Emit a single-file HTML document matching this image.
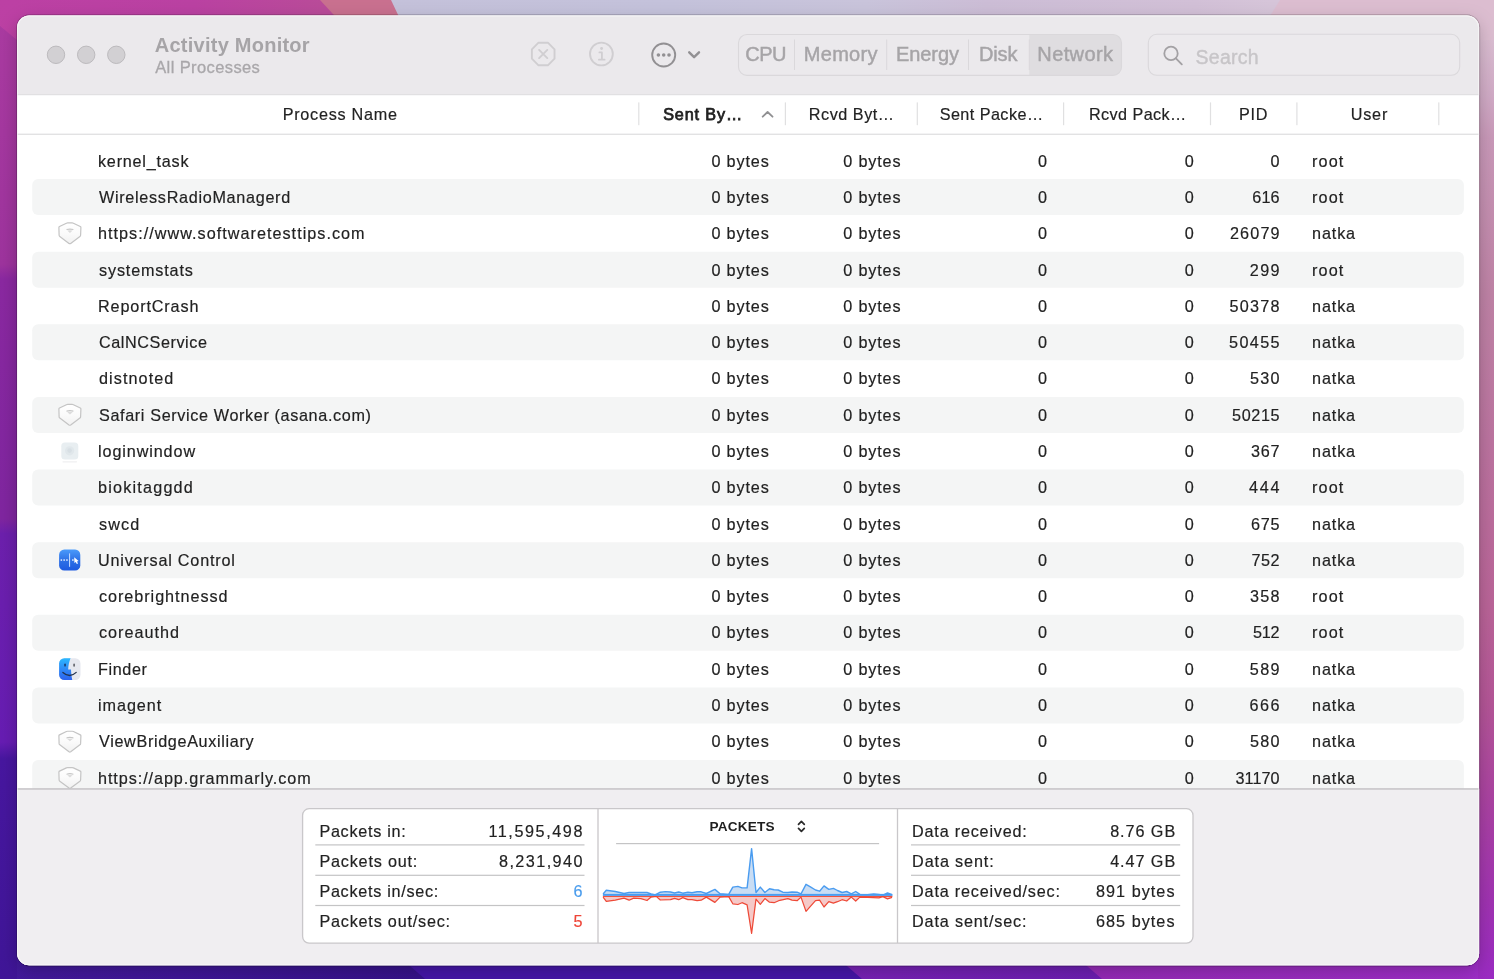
<!DOCTYPE html>
<html lang="en">
<head>
<meta charset="utf-8">
<title>Activity Monitor</title>
<style>
html,body{margin:0;padding:0;}
body{width:1494px;height:979px;overflow:hidden;position:relative;background:#8a2aa0;font-family:"Liberation Sans", sans-serif;}
.abs,.t,.stripe{position:absolute;}
.t{white-space:pre;font-family:"Liberation Sans", sans-serif;-webkit-text-stroke:0.18px currentColor;}

#bg{position:absolute;left:0;top:0;width:1494px;height:979px;display:block;}
#win{position:absolute;left:0;top:0;width:1494px;height:979px;}
#txt{position:absolute;left:0;top:0;width:1494px;height:979px;will-change:transform;}

</style>
</head>
<body>
<svg id="bg" width="1494" height="979" viewBox="0 0 1494 979"><defs><linearGradient id="gl" gradientUnits="userSpaceOnUse" x1="0" y1="0" x2="0" y2="979"><stop offset="0" stop-color="#bc40a4"/><stop offset="0.06" stop-color="#bb40a3"/><stop offset="0.25" stop-color="#9d339d"/><stop offset="1" stop-color="#9d339d"/></linearGradient><linearGradient id="gl2" gradientUnits="userSpaceOnUse" x1="0" y1="0" x2="0" y2="979"><stop offset="0" stop-color="#ab3ba1"/><stop offset="0.27" stop-color="#9d339d"/><stop offset="0.285" stop-color="#8a28a0"/><stop offset="0.53" stop-color="#7f259f"/><stop offset="0.545" stop-color="#6c1fac"/><stop offset="0.758" stop-color="#661cb2"/><stop offset="0.775" stop-color="#47169f"/><stop offset="1" stop-color="#3f1597"/></linearGradient><linearGradient id="shg" gradientUnits="userSpaceOnUse" x1="0" y1="223" x2="0" y2="244"><stop offset="0" stop-color="#ffffff"/><stop offset="0.45" stop-color="#fbfbfb"/><stop offset="1" stop-color="#f1f1f1"/></linearGradient><linearGradient id="gr" gradientUnits="userSpaceOnUse" x1="0" y1="0" x2="0" y2="979"><stop offset="0" stop-color="#dcc0d3"/><stop offset="0.04" stop-color="#dabdd1"/><stop offset="0.1" stop-color="#d0aac5"/><stop offset="0.14" stop-color="#c999b9"/><stop offset="0.3" stop-color="#bf83a6"/><stop offset="0.45" stop-color="#bc74a0"/><stop offset="0.62" stop-color="#ba6498"/><stop offset="0.72" stop-color="#b45597"/><stop offset="0.82" stop-color="#aa42a2"/><stop offset="0.92" stop-color="#a033b2"/><stop offset="1" stop-color="#9a2bc2"/></linearGradient><linearGradient id="gt" gradientUnits="userSpaceOnUse" x1="0" y1="0" x2="1494" y2="0"><stop offset="0" stop-color="#bc40a4"/><stop offset="0.13" stop-color="#ba41a2"/><stop offset="0.215" stop-color="#b94b99"/><stop offset="0.25" stop-color="#b94b99"/><stop offset="0.2501" stop-color="#c4c1da"/><stop offset="0.45" stop-color="#c4c2db"/><stop offset="0.58" stop-color="#c9c4db"/><stop offset="0.66" stop-color="#ccbdd6"/><stop offset="0.8" stop-color="#d2c0d7"/><stop offset="0.85" stop-color="#d6c5d9"/><stop offset="1" stop-color="#d6c5d9"/></linearGradient><linearGradient id="gb" gradientUnits="userSpaceOnUse" x1="0" y1="0" x2="1494" y2="0"><stop offset="0" stop-color="#431a9c"/><stop offset="0.12" stop-color="#3f1698"/><stop offset="0.28" stop-color="#36128a"/><stop offset="1" stop-color="#36128a"/></linearGradient><linearGradient id="gb2" gradientUnits="userSpaceOnUse" x1="817" y1="0" x2="1105" y2="0"><stop offset="0" stop-color="#7a22b6"/><stop offset="1" stop-color="#6c1eb2"/></linearGradient><linearGradient id="gb3" gradientUnits="userSpaceOnUse" x1="1057" y1="0" x2="1494" y2="0"><stop offset="0" stop-color="#952ab6"/><stop offset="1" stop-color="#9e2ec8"/></linearGradient><clipPath id="wc"><rect x="17.1" y="15.5" width="1462.0" height="949.8" rx="12" ry="12"/></clipPath><filter id="sh" x="-5%" y="-5%" width="110%" height="110%"><feGaussianBlur stdDeviation="9"/></filter><clipPath id="segc"><rect x="738.5" y="34.5" width="383.0" height="40.9" rx="8.5"/></clipPath><linearGradient id="ucg" gradientUnits="userSpaceOnUse" x1="0" y1="549.4" x2="0" y2="570.6"><stop offset="0" stop-color="#4a9bfb"/><stop offset="0.5" stop-color="#2f72e6"/><stop offset="1" stop-color="#1d5ae0"/></linearGradient><linearGradient id="fg" gradientUnits="userSpaceOnUse" x1="0" y1="658.2" x2="0" y2="680"><stop offset="0" stop-color="#2bb8ff"/><stop offset="0.5" stop-color="#2f8af6"/><stop offset="1" stop-color="#2c62ee"/></linearGradient><clipPath id="fc"><rect x="59.1" y="658.3" width="21.4" height="21.7" rx="5.2"/></clipPath></defs>
<rect x="0" y="0" width="747" height="979" fill="url(#gl)"/>
<rect x="747" y="0" width="747" height="979" fill="url(#gr)"/>
<rect x="17" y="0" width="1461" height="40" fill="url(#gt)"/>
<polygon points="320,0 391,0 410,40 357,40" fill="#c9708f"/>
<polygon points="1280,0 1494,0 1494,40 1255,40" fill="#dcbdd0"/>
<rect x="17" y="940" width="1461" height="39" fill="url(#gb)"/>
<polygon points="380,940 820,940 865,979 425,979" fill="#4516a8"/>
<polygon points="817,940 1060,940 1105,979 862,979" fill="url(#gb2)"/>
<polygon points="1057,940 1478,940 1478,979 1102,979" fill="url(#gb3)"/>
<polygon points="0,26 17,40 17,979 0,979" fill="url(#gl2)"/>
<rect x="17.1" y="21.5" width="1462.0" height="949.8" rx="12" fill="#000" fill-opacity="0.22" filter="url(#sh)"/>
<rect x="16.6" y="15.0" width="1463.0" height="950.8" rx="12.5" fill="none" stroke="#000" stroke-opacity="0.17" stroke-width="1.2"/>
<rect x="26.1" y="14.4" width="1444.0" height="1.2" fill="#000" fill-opacity="0.11"/>
<rect x="26.1" y="965.1999999999999" width="1444.0" height="1.2" fill="#000" fill-opacity="0.16"/>
<g clip-path="url(#wc)">
<rect x="0" y="0" width="1494" height="979" fill="#ffffff"/>
<rect x="0" y="0" width="1494" height="94.6" fill="#ebe9ec"/>
<rect x="0" y="94.2" width="1494" height="1" fill="#dddbde"/>
<rect x="0" y="133.65" width="1494" height="1.2" fill="#dededf"/>
<rect x="0" y="789" width="1494" height="200" fill="#f0eef1"/>
<rect x="32.2" y="179.07" width="1431.7" height="36" rx="6" fill="#f4f5f5"/>
<rect x="32.2" y="251.69" width="1431.7" height="36" rx="6" fill="#f4f5f5"/>
<rect x="32.2" y="324.31" width="1431.7" height="36" rx="6" fill="#f4f5f5"/>
<rect x="32.2" y="396.93" width="1431.7" height="36" rx="6" fill="#f4f5f5"/>
<rect x="32.2" y="469.55" width="1431.7" height="36" rx="6" fill="#f4f5f5"/>
<rect x="32.2" y="542.17" width="1431.7" height="36" rx="6" fill="#f4f5f5"/>
<rect x="32.2" y="614.79" width="1431.7" height="36" rx="6" fill="#f4f5f5"/>
<rect x="32.2" y="687.41" width="1431.7" height="36" rx="6" fill="#f4f5f5"/>
<rect x="32.2" y="760.03" width="1431.7" height="36" rx="6" fill="#f4f5f5"/>
<rect x="0" y="789" width="1494" height="200" fill="#f0eef1"/>
<rect x="0" y="788.2" width="1494" height="1.5" fill="#c5c3c6"/>
<rect x="638.2" y="102.4" width="1.2" height="22.8" fill="#e0e0e1"/>
<rect x="784.8" y="102.4" width="1.2" height="22.8" fill="#e0e0e1"/>
<rect x="916.7" y="102.4" width="1.2" height="22.8" fill="#e0e0e1"/>
<rect x="1063.0" y="102.4" width="1.2" height="22.8" fill="#e0e0e1"/>
<rect x="1209.9" y="102.4" width="1.2" height="22.8" fill="#e0e0e1"/>
<rect x="1296.3" y="102.4" width="1.2" height="22.8" fill="#e0e0e1"/>
<rect x="1438.2" y="102.4" width="1.2" height="22.8" fill="#e0e0e1"/>
<path d="M762.7 116.7 L767.6 112.0 L772.5 116.7" fill="none" stroke="#909092" stroke-width="1.8" stroke-linecap="round" stroke-linejoin="round"/>
</g>
<rect x="17.6" y="16.0" width="1461.0" height="948.8" rx="11.5" fill="none" stroke="#fff" stroke-opacity="0.55" stroke-width="1"/>
<circle cx="56.0" cy="54.8" r="8.7" fill="#d2d0d3" stroke="#bcbabd" stroke-width="1"/>
<circle cx="86.2" cy="54.8" r="8.7" fill="#d2d0d3" stroke="#bcbabd" stroke-width="1"/>
<circle cx="116.3" cy="54.8" r="8.7" fill="#d2d0d3" stroke="#bcbabd" stroke-width="1"/>
<polygon points="554.52,58.69 547.89,65.32 538.51,65.32 531.88,58.69 531.88,49.31 538.51,42.68 547.89,42.68 554.52,49.31" fill="none" stroke="#d0ced1" stroke-width="1.9" stroke-linejoin="round"/>
<path d="M539.1 49.9 L547.3 58.1 M547.3 49.9 L539.1 58.1" stroke="#d0ced1" stroke-width="1.9" stroke-linecap="round" fill="none"/>
<circle cx="601.4" cy="54.0" r="11.4" fill="none" stroke="#d0ced1" stroke-width="1.9"/>
<path d="M599.4 52.4 L601.9 52.4 L601.9 59.4 M598.9 59.7 L604.6 59.7" stroke="#d0ced1" stroke-width="1.8" stroke-linecap="round" stroke-linejoin="round" fill="none"/>
<circle cx="601.6" cy="48.5" r="1.45" fill="#d0ced1"/>
<circle cx="663.7" cy="55.0" r="11.5" fill="none" stroke="#929093" stroke-width="1.9"/>
<circle cx="658.4" cy="55.0" r="1.8" fill="#929093"/>
<circle cx="663.7" cy="55.0" r="1.8" fill="#929093"/>
<circle cx="669.0" cy="55.0" r="1.8" fill="#929093"/>
<path d="M689.2 52.3 L694.1 57.2 L699.0 52.3" fill="none" stroke="#929093" stroke-width="2.4" stroke-linecap="round" stroke-linejoin="round"/>
<rect x="1029.3" y="34.1" width="93" height="41.3" fill="#dfdde0" clip-path="url(#segc)"/>
<rect x="738.5" y="34.5" width="383.0" height="40.9" rx="8.5" fill="none" stroke="#dad8db" stroke-width="1.1"/>
<rect x="794.0" y="39.5" width="1" height="30.5" fill="#dad8db"/>
<rect x="886.2" y="39.5" width="1" height="30.5" fill="#dad8db"/>
<rect x="968.0" y="39.5" width="1" height="30.5" fill="#dad8db"/>
<rect x="1028.8" y="39.5" width="1" height="30.5" fill="#dad8db"/>
<rect x="1148.3" y="34.3" width="311.4" height="41" rx="8.5" fill="#eceaed" stroke="#dad8db" stroke-width="1.1"/>
<circle cx="1171.0" cy="53.4" r="6.7" fill="none" stroke="#a3a1a4" stroke-width="1.8"/>
<path d="M1175.9 58.4 L1181.8 64.3" stroke="#a3a1a4" stroke-width="1.9" stroke-linecap="round"/>
<rect x="302.6" y="808.7" width="890.4" height="134.4" rx="6.5" fill="#ffffff" stroke="#c9c7ca" stroke-width="1.3"/>
<rect x="597.35" y="809" width="1.3" height="134" fill="#c9c7ca"/>
<rect x="896.85" y="809" width="1.3" height="134" fill="#c9c7ca"/>
<rect x="315.3" y="844.3" width="269.2" height="1.2" fill="#c4c4c5"/>
<rect x="911.0" y="844.3" width="269.2" height="1.2" fill="#c4c4c5"/>
<rect x="315.3" y="874.6999999999999" width="269.2" height="1.2" fill="#c4c4c5"/>
<rect x="911.0" y="874.6999999999999" width="269.2" height="1.2" fill="#c4c4c5"/>
<rect x="315.3" y="904.9" width="269.2" height="1.2" fill="#c4c4c5"/>
<rect x="911.0" y="904.9" width="269.2" height="1.2" fill="#c4c4c5"/>
<rect x="616.1" y="843.0" width="263" height="1.2" fill="#c4c4c5"/>
<path d="M798.5 824.3 L801.4 821.3 L804.3 824.3 M798.5 828.3 L801.4 831.3 L804.3 828.3" fill="none" stroke="#2a2a2a" stroke-width="1.7" stroke-linecap="round" stroke-linejoin="round"/>
<path d="M603.1 896.3000000000001 L603.1 897.1 L606.3 901.4 L615.3 900.2 L624.0 898.1 L629.1 900.2 L633.7 898.1 L640.9 898.6 L647.0 900.5 L651.1 897.1 L656.2 896.4 L660.3 900.0 L670.5 899.7 L674.6 898.3 L678.7 899.7 L682.8 897.6 L687.9 899.7 L692.0 899.7 L697.1 900.7 L701.2 900.2 L706.3 897.1 L714.9 902.4 L720.1 897.1 L728.7 896.6 L732.8 903.8 L737.9 904.5 L742.0 902.7 L747.1 904.8 L751.6 933.4 L756.0 899.2 L760.3 904.3 L764.9 898.6 L769.5 902.2 L774.1 902.7 L778.7 900.7 L787.9 898.6 L792.0 900.2 L797.1 900.7 L801.0 897.1 L806.0 911.4 L810.4 906.3 L815.5 900.7 L819.6 900.2 L824.0 907.0 L828.8 901.7 L833.4 903.2 L837.5 901.7 L842.1 899.7 L846.7 901.0 L851.3 897.1 L855.7 901.0 L859.9 897.1 L867.6 897.3 L878.9 897.9 L882.9 896.6 L887.5 898.9 L892.1 897.3 L892.1 896.3000000000001 Z" fill="#f5c9c8"/>
<path d="M603.1 897.1 L606.3 901.4 L615.3 900.2 L624.0 898.1 L629.1 900.2 L633.7 898.1 L640.9 898.6 L647.0 900.5 L651.1 897.1 L656.2 896.4 L660.3 900.0 L670.5 899.7 L674.6 898.3 L678.7 899.7 L682.8 897.6 L687.9 899.7 L692.0 899.7 L697.1 900.7 L701.2 900.2 L706.3 897.1 L714.9 902.4 L720.1 897.1 L728.7 896.6 L732.8 903.8 L737.9 904.5 L742.0 902.7 L747.1 904.8 L751.6 933.4 L756.0 899.2 L760.3 904.3 L764.9 898.6 L769.5 902.2 L774.1 902.7 L778.7 900.7 L787.9 898.6 L792.0 900.2 L797.1 900.7 L801.0 897.1 L806.0 911.4 L810.4 906.3 L815.5 900.7 L819.6 900.2 L824.0 907.0 L828.8 901.7 L833.4 903.2 L837.5 901.7 L842.1 899.7 L846.7 901.0 L851.3 897.1 L855.7 901.0 L859.9 897.1 L867.6 897.3 L878.9 897.9 L882.9 896.6 L887.5 898.9 L892.1 897.3" fill="none" stroke="#ee4a38" stroke-width="1.25" stroke-linejoin="round"/>
<path d="M603.1 895.1 L603.1 894.0 L606.3 890.2 L615.3 891.5 L624.0 893.5 L629.1 892.5 L647.0 892.5 L651.1 894.0 L655.2 894.9 L660.3 892.2 L665.4 891.6 L670.5 892.0 L674.6 893.0 L678.7 892.0 L682.8 893.2 L687.9 892.2 L692.0 892.8 L697.1 891.7 L701.2 891.8 L706.3 893.5 L714.9 889.4 L720.1 893.8 L728.7 894.4 L732.8 887.1 L737.9 886.4 L742.0 887.9 L747.1 887.9 L751.6 848.6 L756.0 892.5 L760.3 887.1 L764.9 892.5 L769.5 888.7 L774.1 889.7 L778.2 890.0 L782.8 892.2 L787.9 892.5 L792.0 892.0 L797.1 892.2 L801.0 893.8 L806.0 884.3 L810.4 886.9 L815.5 890.0 L819.6 891.2 L824.0 885.9 L828.8 889.4 L833.4 888.4 L837.5 890.5 L842.1 892.5 L846.7 891.5 L851.3 893.8 L855.7 891.5 L859.9 894.4 L867.6 894.6 L873.7 894.0 L878.9 894.4 L882.9 895.1 L887.5 893.0 L892.1 894.6 L892.1 895.1 Z" fill="#c9ddf4"/>
<path d="M603.1 894.0 L606.3 890.2 L615.3 891.5 L624.0 893.5 L629.1 892.5 L647.0 892.5 L651.1 894.0 L655.2 894.9 L660.3 892.2 L665.4 891.6 L670.5 892.0 L674.6 893.0 L678.7 892.0 L682.8 893.2 L687.9 892.2 L692.0 892.8 L697.1 891.7 L701.2 891.8 L706.3 893.5 L714.9 889.4 L720.1 893.8 L728.7 894.4 L732.8 887.1 L737.9 886.4 L742.0 887.9 L747.1 887.9 L751.6 848.6 L756.0 892.5 L760.3 887.1 L764.9 892.5 L769.5 888.7 L774.1 889.7 L778.2 890.0 L782.8 892.2 L787.9 892.5 L792.0 892.0 L797.1 892.2 L801.0 893.8 L806.0 884.3 L810.4 886.9 L815.5 890.0 L819.6 891.2 L824.0 885.9 L828.8 889.4 L833.4 888.4 L837.5 890.5 L842.1 892.5 L846.7 891.5 L851.3 893.8 L855.7 891.5 L859.9 894.4 L867.6 894.6 L873.7 894.0 L878.9 894.4 L882.9 895.1 L887.5 893.0 L892.1 894.6" fill="none" stroke="#4a9cf0" stroke-width="1.4" stroke-linejoin="round"/>
<rect x="602.9" y="895.7" width="289.5" height="1.2" fill="#f0452f"/>
<rect x="602.9" y="893.9" width="289.5" height="2" fill="#4a9ef2"/>
<g transform="translate(0 0.00)"><path d="M67.6 222.9 L72.2 222.9 Q72.8 222.9 73.4 223.2 L80.3 226.5 Q80.9 226.8 80.9 227.5 L80.6 235.3 Q80.5 236.1 79.9 236.5 L70.7 243.4 Q69.85 244.0 69.0 243.4 L59.8 236.5 Q59.2 236.1 59.1 235.3 L58.9 227.5 Q58.9 226.8 59.5 226.5 L66.4 223.2 Q67.0 222.9 67.6 222.9 Z" fill="url(#shg)" stroke="#c4c4c4" stroke-width="1.2" stroke-linejoin="round"/><path d="M66.5 229.0 Q69.9 227.9 73.4 229.0 L73.4 230.1 Q69.9 229.2 66.5 230.1 Z" fill="#c6c6c6"/><path d="M67.3 230.6 Q69.9 230.0 72.6 230.6 L69.95 232.9 Z" fill="#dcdcdc"/></g>
<g transform="translate(0 181.55)"><path d="M67.6 222.9 L72.2 222.9 Q72.8 222.9 73.4 223.2 L80.3 226.5 Q80.9 226.8 80.9 227.5 L80.6 235.3 Q80.5 236.1 79.9 236.5 L70.7 243.4 Q69.85 244.0 69.0 243.4 L59.8 236.5 Q59.2 236.1 59.1 235.3 L58.9 227.5 Q58.9 226.8 59.5 226.5 L66.4 223.2 Q67.0 222.9 67.6 222.9 Z" fill="url(#shg)" stroke="#c4c4c4" stroke-width="1.2" stroke-linejoin="round"/><path d="M66.5 229.0 Q69.9 227.9 73.4 229.0 L73.4 230.1 Q69.9 229.2 66.5 230.1 Z" fill="#c6c6c6"/><path d="M67.3 230.6 Q69.9 230.0 72.6 230.6 L69.95 232.9 Z" fill="#dcdcdc"/></g>
<g transform="translate(0 508.34)"><path d="M67.6 222.9 L72.2 222.9 Q72.8 222.9 73.4 223.2 L80.3 226.5 Q80.9 226.8 80.9 227.5 L80.6 235.3 Q80.5 236.1 79.9 236.5 L70.7 243.4 Q69.85 244.0 69.0 243.4 L59.8 236.5 Q59.2 236.1 59.1 235.3 L58.9 227.5 Q58.9 226.8 59.5 226.5 L66.4 223.2 Q67.0 222.9 67.6 222.9 Z" fill="url(#shg)" stroke="#c4c4c4" stroke-width="1.2" stroke-linejoin="round"/><path d="M66.5 229.0 Q69.9 227.9 73.4 229.0 L73.4 230.1 Q69.9 229.2 66.5 230.1 Z" fill="#c6c6c6"/><path d="M67.3 230.6 Q69.9 230.0 72.6 230.6 L69.95 232.9 Z" fill="#dcdcdc"/></g>
<g transform="translate(0 544.65)"><path d="M67.6 222.9 L72.2 222.9 Q72.8 222.9 73.4 223.2 L80.3 226.5 Q80.9 226.8 80.9 227.5 L80.6 235.3 Q80.5 236.1 79.9 236.5 L70.7 243.4 Q69.85 244.0 69.0 243.4 L59.8 236.5 Q59.2 236.1 59.1 235.3 L58.9 227.5 Q58.9 226.8 59.5 226.5 L66.4 223.2 Q67.0 222.9 67.6 222.9 Z" fill="url(#shg)" stroke="#c4c4c4" stroke-width="1.2" stroke-linejoin="round"/><path d="M66.5 229.0 Q69.9 227.9 73.4 229.0 L73.4 230.1 Q69.9 229.2 66.5 230.1 Z" fill="#c6c6c6"/><path d="M67.3 230.6 Q69.9 230.0 72.6 230.6 L69.95 232.9 Z" fill="#dcdcdc"/></g>
<rect x="61.3" y="442.6" width="17" height="17" rx="3.6" fill="#e8eef1"/>
<circle cx="69.6" cy="450.8" r="4.6" fill="#e0e7eb"/>
<circle cx="69.6" cy="450.6" r="2.3" fill="#d7dfe4"/>
<rect x="62.5" y="461.2" width="14.6" height="1.2" rx="0.6" fill="#ededee" opacity="0.9"/>
<rect x="59.1" y="549.5" width="21.2" height="21.1" rx="5.2" fill="url(#ucg)"/>
<rect x="69.0" y="553.4" width="1.1" height="13.4" fill="#bcd6ff"/>
<rect x="60.6" y="559.3" width="1.5" height="1.5" fill="#e8f0ff"/>
<rect x="63.4" y="559.3" width="1.5" height="1.5" fill="#e8f0ff"/>
<rect x="66.2" y="559.3" width="1.5" height="1.5" fill="#e8f0ff"/>
<rect x="72.1" y="559.3" width="1.5" height="1.5" fill="#e8f0ff"/>
<path d="M74.2 557.2 L78.6 561.0 L77.0 561.4 L78.0 563.6 L76.8 564.0 L75.8 561.9 L74.4 562.9 Z" fill="#ffffff"/>
<g clip-path="url(#fc)"><rect x="59" y="658" width="22" height="22.2" fill="#e6e8ef"/><path d="M59 658 L70.6 658 C69.2 661.5 68.3 665.5 68.2 669.5 L71.0 669.5 C71.2 673.5 71.6 677 72.3 680.2 L59 680.2 Z" fill="url(#fg)"/></g>
<rect x="64.2" y="663.4" width="1.7" height="3.1" rx="0.85" fill="#1c3f73"/>
<rect x="73.3" y="663.6" width="1.6" height="3.1" rx="0.8" fill="#5d5f66"/>
<path d="M62.9 672.4 Q69.8 678.6 76.2 672.4" fill="none" stroke="#23334f" stroke-width="1.3" stroke-linecap="round"/>
</svg>
<div id="win">





<div id="txt">
<span class="t" style="left:154.80px;top:32.30px;font-size:20px;line-height:26px;letter-spacing:0.245px;color:#a6a4a7;font-weight:700;-webkit-text-stroke-width:0px;">Activity Monitor</span>
<span class="t" style="left:155.20px;top:55.70px;font-size:16.5px;line-height:22px;letter-spacing:0.392px;color:#a9a7aa;-webkit-text-stroke-width:0.3px;">All Processes</span>
<span class="t" style="left:745.20px;top:41.30px;font-size:20px;line-height:26px;letter-spacing:-0.492px;color:#a6a4a7;-webkit-text-stroke-width:0.45px;">CPU</span>
<span class="t" style="left:803.80px;top:41.30px;font-size:20px;line-height:26px;letter-spacing:0.275px;color:#a6a4a7;-webkit-text-stroke-width:0.45px;">Memory</span>
<span class="t" style="left:895.90px;top:41.30px;font-size:20px;line-height:26px;letter-spacing:-0.054px;color:#a6a4a7;-webkit-text-stroke-width:0.45px;">Energy</span>
<span class="t" style="left:978.90px;top:41.30px;font-size:20px;line-height:26px;letter-spacing:-0.129px;color:#a6a4a7;-webkit-text-stroke-width:0.45px;">Disk</span>
<span class="t" style="left:1037.30px;top:41.30px;font-size:20px;line-height:26px;letter-spacing:0.392px;color:#a6a4a7;-webkit-text-stroke-width:0.45px;">Network</span>
<span class="t" style="left:1195.60px;top:43.80px;font-size:19.5px;line-height:26px;letter-spacing:0.232px;color:#c7c5c8;-webkit-text-stroke-width:0.4px;">Search</span>
<span class="t" style="left:282.70px;top:103.10px;font-size:16.2px;line-height:22px;letter-spacing:0.732px;color:#222222;">Process Name</span>
<span class="t" style="left:663.20px;top:103.10px;font-size:16.2px;line-height:22px;letter-spacing:0.859px;color:#222222;-webkit-text-stroke-width:0.75px;">Sent By…</span>
<span class="t" style="left:808.80px;top:103.10px;font-size:16.2px;line-height:22px;letter-spacing:0.529px;color:#222222;">Rcvd Byt…</span>
<span class="t" style="left:939.70px;top:103.10px;font-size:16.2px;line-height:22px;letter-spacing:0.441px;color:#222222;">Sent Packe…</span>
<span class="t" style="left:1089.00px;top:103.10px;font-size:16.2px;line-height:22px;letter-spacing:0.415px;color:#222222;">Rcvd Pack…</span>
<span class="t" style="left:1239.00px;top:103.10px;font-size:16.2px;line-height:22px;letter-spacing:0.753px;color:#222222;">PID</span>
<span class="t" style="left:1350.80px;top:103.10px;font-size:16.2px;line-height:22px;letter-spacing:0.771px;color:#222222;">User</span>
<span class="t" style="left:98.00px;top:149.80px;font-size:16.2px;line-height:22px;letter-spacing:0.771px;color:#222222;">kernel_task</span>
<span class="t" style="left:711.40px;top:149.80px;font-size:16.2px;line-height:22px;letter-spacing:0.867px;color:#222222;">0 bytes</span>
<span class="t" style="left:843.20px;top:149.80px;font-size:16.2px;line-height:22px;letter-spacing:0.867px;color:#222222;">0 bytes</span>
<span class="t" style="left:1037.90px;top:149.80px;font-size:16.2px;line-height:22px;letter-spacing:0.550px;color:#222222;">0</span>
<span class="t" style="left:1184.80px;top:149.80px;font-size:16.2px;line-height:22px;letter-spacing:0.550px;color:#222222;">0</span>
<span class="t" style="left:1270.60px;top:149.80px;font-size:16.2px;line-height:22px;letter-spacing:0.000px;color:#222222;">0</span>
<span class="t" style="left:1312.10px;top:149.80px;font-size:16.2px;line-height:22px;letter-spacing:1.101px;color:#222222;">root</span>
<span class="t" style="left:99.00px;top:186.08px;font-size:16.2px;line-height:22px;letter-spacing:0.698px;color:#222222;">WirelessRadioManagerd</span>
<span class="t" style="left:711.40px;top:186.08px;font-size:16.2px;line-height:22px;letter-spacing:0.867px;color:#222222;">0 bytes</span>
<span class="t" style="left:843.20px;top:186.08px;font-size:16.2px;line-height:22px;letter-spacing:0.867px;color:#222222;">0 bytes</span>
<span class="t" style="left:1037.90px;top:186.08px;font-size:16.2px;line-height:22px;letter-spacing:0.550px;color:#222222;">0</span>
<span class="t" style="left:1184.80px;top:186.08px;font-size:16.2px;line-height:22px;letter-spacing:0.550px;color:#222222;">0</span>
<span class="t" style="left:1252.20px;top:186.08px;font-size:16.2px;line-height:22px;letter-spacing:0.197px;color:#222222;">616</span>
<span class="t" style="left:1312.10px;top:186.08px;font-size:16.2px;line-height:22px;letter-spacing:1.101px;color:#222222;">root</span>
<span class="t" style="left:98.00px;top:222.36px;font-size:16.2px;line-height:22px;letter-spacing:1.025px;color:#222222;">https://www.softwaretesttips.com</span>
<span class="t" style="left:711.40px;top:222.36px;font-size:16.2px;line-height:22px;letter-spacing:0.867px;color:#222222;">0 bytes</span>
<span class="t" style="left:843.20px;top:222.36px;font-size:16.2px;line-height:22px;letter-spacing:0.867px;color:#222222;">0 bytes</span>
<span class="t" style="left:1037.90px;top:222.36px;font-size:16.2px;line-height:22px;letter-spacing:0.550px;color:#222222;">0</span>
<span class="t" style="left:1184.80px;top:222.36px;font-size:16.2px;line-height:22px;letter-spacing:0.550px;color:#222222;">0</span>
<span class="t" style="left:1229.90px;top:222.36px;font-size:16.2px;line-height:22px;letter-spacing:1.172px;color:#222222;">26079</span>
<span class="t" style="left:1312.10px;top:222.36px;font-size:16.2px;line-height:22px;letter-spacing:0.851px;color:#222222;">natka</span>
<span class="t" style="left:99.00px;top:258.64px;font-size:16.2px;line-height:22px;letter-spacing:0.844px;color:#222222;">systemstats</span>
<span class="t" style="left:711.40px;top:258.64px;font-size:16.2px;line-height:22px;letter-spacing:0.867px;color:#222222;">0 bytes</span>
<span class="t" style="left:843.20px;top:258.64px;font-size:16.2px;line-height:22px;letter-spacing:0.867px;color:#222222;">0 bytes</span>
<span class="t" style="left:1037.90px;top:258.64px;font-size:16.2px;line-height:22px;letter-spacing:0.550px;color:#222222;">0</span>
<span class="t" style="left:1184.80px;top:258.64px;font-size:16.2px;line-height:22px;letter-spacing:0.550px;color:#222222;">0</span>
<span class="t" style="left:1249.80px;top:258.64px;font-size:16.2px;line-height:22px;letter-spacing:1.397px;color:#222222;">299</span>
<span class="t" style="left:1312.10px;top:258.64px;font-size:16.2px;line-height:22px;letter-spacing:1.101px;color:#222222;">root</span>
<span class="t" style="left:98.00px;top:294.92px;font-size:16.2px;line-height:22px;letter-spacing:0.864px;color:#222222;">ReportCrash</span>
<span class="t" style="left:711.40px;top:294.92px;font-size:16.2px;line-height:22px;letter-spacing:0.867px;color:#222222;">0 bytes</span>
<span class="t" style="left:843.20px;top:294.92px;font-size:16.2px;line-height:22px;letter-spacing:0.867px;color:#222222;">0 bytes</span>
<span class="t" style="left:1037.90px;top:294.92px;font-size:16.2px;line-height:22px;letter-spacing:0.550px;color:#222222;">0</span>
<span class="t" style="left:1184.80px;top:294.92px;font-size:16.2px;line-height:22px;letter-spacing:0.550px;color:#222222;">0</span>
<span class="t" style="left:1229.60px;top:294.92px;font-size:16.2px;line-height:22px;letter-spacing:1.247px;color:#222222;">50378</span>
<span class="t" style="left:1312.10px;top:294.92px;font-size:16.2px;line-height:22px;letter-spacing:0.851px;color:#222222;">natka</span>
<span class="t" style="left:99.00px;top:331.20px;font-size:16.2px;line-height:22px;letter-spacing:0.569px;color:#222222;">CalNCService</span>
<span class="t" style="left:711.40px;top:331.20px;font-size:16.2px;line-height:22px;letter-spacing:0.867px;color:#222222;">0 bytes</span>
<span class="t" style="left:843.20px;top:331.20px;font-size:16.2px;line-height:22px;letter-spacing:0.867px;color:#222222;">0 bytes</span>
<span class="t" style="left:1037.90px;top:331.20px;font-size:16.2px;line-height:22px;letter-spacing:0.550px;color:#222222;">0</span>
<span class="t" style="left:1184.80px;top:331.20px;font-size:16.2px;line-height:22px;letter-spacing:0.550px;color:#222222;">0</span>
<span class="t" style="left:1229.10px;top:331.20px;font-size:16.2px;line-height:22px;letter-spacing:1.372px;color:#222222;">50455</span>
<span class="t" style="left:1312.10px;top:331.20px;font-size:16.2px;line-height:22px;letter-spacing:0.851px;color:#222222;">natka</span>
<span class="t" style="left:99.00px;top:367.48px;font-size:16.2px;line-height:22px;letter-spacing:1.076px;color:#222222;">distnoted</span>
<span class="t" style="left:711.40px;top:367.48px;font-size:16.2px;line-height:22px;letter-spacing:0.867px;color:#222222;">0 bytes</span>
<span class="t" style="left:843.20px;top:367.48px;font-size:16.2px;line-height:22px;letter-spacing:0.867px;color:#222222;">0 bytes</span>
<span class="t" style="left:1037.90px;top:367.48px;font-size:16.2px;line-height:22px;letter-spacing:0.550px;color:#222222;">0</span>
<span class="t" style="left:1184.80px;top:367.48px;font-size:16.2px;line-height:22px;letter-spacing:0.550px;color:#222222;">0</span>
<span class="t" style="left:1250.10px;top:367.48px;font-size:16.2px;line-height:22px;letter-spacing:1.247px;color:#222222;">530</span>
<span class="t" style="left:1312.10px;top:367.48px;font-size:16.2px;line-height:22px;letter-spacing:0.851px;color:#222222;">natka</span>
<span class="t" style="left:99.00px;top:403.76px;font-size:16.2px;line-height:22px;letter-spacing:0.635px;color:#222222;">Safari Service Worker (asana.com)</span>
<span class="t" style="left:711.40px;top:403.76px;font-size:16.2px;line-height:22px;letter-spacing:0.867px;color:#222222;">0 bytes</span>
<span class="t" style="left:843.20px;top:403.76px;font-size:16.2px;line-height:22px;letter-spacing:0.867px;color:#222222;">0 bytes</span>
<span class="t" style="left:1037.90px;top:403.76px;font-size:16.2px;line-height:22px;letter-spacing:0.550px;color:#222222;">0</span>
<span class="t" style="left:1184.80px;top:403.76px;font-size:16.2px;line-height:22px;letter-spacing:0.550px;color:#222222;">0</span>
<span class="t" style="left:1232.10px;top:403.76px;font-size:16.2px;line-height:22px;letter-spacing:0.622px;color:#222222;">50215</span>
<span class="t" style="left:1312.10px;top:403.76px;font-size:16.2px;line-height:22px;letter-spacing:0.851px;color:#222222;">natka</span>
<span class="t" style="left:98.00px;top:440.04px;font-size:16.2px;line-height:22px;letter-spacing:0.890px;color:#222222;">loginwindow</span>
<span class="t" style="left:711.40px;top:440.04px;font-size:16.2px;line-height:22px;letter-spacing:0.867px;color:#222222;">0 bytes</span>
<span class="t" style="left:843.20px;top:440.04px;font-size:16.2px;line-height:22px;letter-spacing:0.867px;color:#222222;">0 bytes</span>
<span class="t" style="left:1037.90px;top:440.04px;font-size:16.2px;line-height:22px;letter-spacing:0.550px;color:#222222;">0</span>
<span class="t" style="left:1184.80px;top:440.04px;font-size:16.2px;line-height:22px;letter-spacing:0.550px;color:#222222;">0</span>
<span class="t" style="left:1250.90px;top:440.04px;font-size:16.2px;line-height:22px;letter-spacing:0.847px;color:#222222;">367</span>
<span class="t" style="left:1312.10px;top:440.04px;font-size:16.2px;line-height:22px;letter-spacing:0.851px;color:#222222;">natka</span>
<span class="t" style="left:98.00px;top:476.32px;font-size:16.2px;line-height:22px;letter-spacing:1.200px;color:#222222;">biokitaggdd</span>
<span class="t" style="left:711.40px;top:476.32px;font-size:16.2px;line-height:22px;letter-spacing:0.867px;color:#222222;">0 bytes</span>
<span class="t" style="left:843.20px;top:476.32px;font-size:16.2px;line-height:22px;letter-spacing:0.867px;color:#222222;">0 bytes</span>
<span class="t" style="left:1037.90px;top:476.32px;font-size:16.2px;line-height:22px;letter-spacing:0.550px;color:#222222;">0</span>
<span class="t" style="left:1184.80px;top:476.32px;font-size:16.2px;line-height:22px;letter-spacing:0.550px;color:#222222;">0</span>
<span class="t" style="left:1249.00px;top:476.32px;font-size:16.2px;line-height:22px;letter-spacing:1.797px;color:#222222;">444</span>
<span class="t" style="left:1312.10px;top:476.32px;font-size:16.2px;line-height:22px;letter-spacing:1.101px;color:#222222;">root</span>
<span class="t" style="left:99.00px;top:512.60px;font-size:16.2px;line-height:22px;letter-spacing:1.107px;color:#222222;">swcd</span>
<span class="t" style="left:711.40px;top:512.60px;font-size:16.2px;line-height:22px;letter-spacing:0.867px;color:#222222;">0 bytes</span>
<span class="t" style="left:843.20px;top:512.60px;font-size:16.2px;line-height:22px;letter-spacing:0.867px;color:#222222;">0 bytes</span>
<span class="t" style="left:1037.90px;top:512.60px;font-size:16.2px;line-height:22px;letter-spacing:0.550px;color:#222222;">0</span>
<span class="t" style="left:1184.80px;top:512.60px;font-size:16.2px;line-height:22px;letter-spacing:0.550px;color:#222222;">0</span>
<span class="t" style="left:1250.90px;top:512.60px;font-size:16.2px;line-height:22px;letter-spacing:0.847px;color:#222222;">675</span>
<span class="t" style="left:1312.10px;top:512.60px;font-size:16.2px;line-height:22px;letter-spacing:0.851px;color:#222222;">natka</span>
<span class="t" style="left:98.00px;top:548.88px;font-size:16.2px;line-height:22px;letter-spacing:0.790px;color:#222222;">Universal Control</span>
<span class="t" style="left:711.40px;top:548.88px;font-size:16.2px;line-height:22px;letter-spacing:0.867px;color:#222222;">0 bytes</span>
<span class="t" style="left:843.20px;top:548.88px;font-size:16.2px;line-height:22px;letter-spacing:0.867px;color:#222222;">0 bytes</span>
<span class="t" style="left:1037.90px;top:548.88px;font-size:16.2px;line-height:22px;letter-spacing:0.550px;color:#222222;">0</span>
<span class="t" style="left:1184.80px;top:548.88px;font-size:16.2px;line-height:22px;letter-spacing:0.550px;color:#222222;">0</span>
<span class="t" style="left:1251.50px;top:548.88px;font-size:16.2px;line-height:22px;letter-spacing:0.547px;color:#222222;">752</span>
<span class="t" style="left:1312.10px;top:548.88px;font-size:16.2px;line-height:22px;letter-spacing:0.851px;color:#222222;">natka</span>
<span class="t" style="left:99.00px;top:585.16px;font-size:16.2px;line-height:22px;letter-spacing:0.952px;color:#222222;">corebrightnessd</span>
<span class="t" style="left:711.40px;top:585.16px;font-size:16.2px;line-height:22px;letter-spacing:0.867px;color:#222222;">0 bytes</span>
<span class="t" style="left:843.20px;top:585.16px;font-size:16.2px;line-height:22px;letter-spacing:0.867px;color:#222222;">0 bytes</span>
<span class="t" style="left:1037.90px;top:585.16px;font-size:16.2px;line-height:22px;letter-spacing:0.550px;color:#222222;">0</span>
<span class="t" style="left:1184.80px;top:585.16px;font-size:16.2px;line-height:22px;letter-spacing:0.550px;color:#222222;">0</span>
<span class="t" style="left:1250.10px;top:585.16px;font-size:16.2px;line-height:22px;letter-spacing:1.247px;color:#222222;">358</span>
<span class="t" style="left:1312.10px;top:585.16px;font-size:16.2px;line-height:22px;letter-spacing:1.101px;color:#222222;">root</span>
<span class="t" style="left:99.00px;top:621.44px;font-size:16.2px;line-height:22px;letter-spacing:1.001px;color:#222222;">coreauthd</span>
<span class="t" style="left:711.40px;top:621.44px;font-size:16.2px;line-height:22px;letter-spacing:0.867px;color:#222222;">0 bytes</span>
<span class="t" style="left:843.20px;top:621.44px;font-size:16.2px;line-height:22px;letter-spacing:0.867px;color:#222222;">0 bytes</span>
<span class="t" style="left:1037.90px;top:621.44px;font-size:16.2px;line-height:22px;letter-spacing:0.550px;color:#222222;">0</span>
<span class="t" style="left:1184.80px;top:621.44px;font-size:16.2px;line-height:22px;letter-spacing:0.550px;color:#222222;">0</span>
<span class="t" style="left:1253.10px;top:621.44px;font-size:16.2px;line-height:22px;letter-spacing:-0.253px;color:#222222;">512</span>
<span class="t" style="left:1312.10px;top:621.44px;font-size:16.2px;line-height:22px;letter-spacing:1.101px;color:#222222;">root</span>
<span class="t" style="left:98.00px;top:657.72px;font-size:16.2px;line-height:22px;letter-spacing:0.622px;color:#222222;">Finder</span>
<span class="t" style="left:711.40px;top:657.72px;font-size:16.2px;line-height:22px;letter-spacing:0.867px;color:#222222;">0 bytes</span>
<span class="t" style="left:843.20px;top:657.72px;font-size:16.2px;line-height:22px;letter-spacing:0.867px;color:#222222;">0 bytes</span>
<span class="t" style="left:1037.90px;top:657.72px;font-size:16.2px;line-height:22px;letter-spacing:0.550px;color:#222222;">0</span>
<span class="t" style="left:1184.80px;top:657.72px;font-size:16.2px;line-height:22px;letter-spacing:0.550px;color:#222222;">0</span>
<span class="t" style="left:1249.80px;top:657.72px;font-size:16.2px;line-height:22px;letter-spacing:1.397px;color:#222222;">589</span>
<span class="t" style="left:1312.10px;top:657.72px;font-size:16.2px;line-height:22px;letter-spacing:0.851px;color:#222222;">natka</span>
<span class="t" style="left:98.00px;top:694.00px;font-size:16.2px;line-height:22px;letter-spacing:0.935px;color:#222222;">imagent</span>
<span class="t" style="left:711.40px;top:694.00px;font-size:16.2px;line-height:22px;letter-spacing:0.867px;color:#222222;">0 bytes</span>
<span class="t" style="left:843.20px;top:694.00px;font-size:16.2px;line-height:22px;letter-spacing:0.867px;color:#222222;">0 bytes</span>
<span class="t" style="left:1037.90px;top:694.00px;font-size:16.2px;line-height:22px;letter-spacing:0.550px;color:#222222;">0</span>
<span class="t" style="left:1184.80px;top:694.00px;font-size:16.2px;line-height:22px;letter-spacing:0.550px;color:#222222;">0</span>
<span class="t" style="left:1249.40px;top:694.00px;font-size:16.2px;line-height:22px;letter-spacing:1.597px;color:#222222;">666</span>
<span class="t" style="left:1312.10px;top:694.00px;font-size:16.2px;line-height:22px;letter-spacing:0.851px;color:#222222;">natka</span>
<span class="t" style="left:99.00px;top:730.28px;font-size:16.2px;line-height:22px;letter-spacing:0.658px;color:#222222;">ViewBridgeAuxiliary</span>
<span class="t" style="left:711.40px;top:730.28px;font-size:16.2px;line-height:22px;letter-spacing:0.867px;color:#222222;">0 bytes</span>
<span class="t" style="left:843.20px;top:730.28px;font-size:16.2px;line-height:22px;letter-spacing:0.867px;color:#222222;">0 bytes</span>
<span class="t" style="left:1037.90px;top:730.28px;font-size:16.2px;line-height:22px;letter-spacing:0.550px;color:#222222;">0</span>
<span class="t" style="left:1184.80px;top:730.28px;font-size:16.2px;line-height:22px;letter-spacing:0.550px;color:#222222;">0</span>
<span class="t" style="left:1250.10px;top:730.28px;font-size:16.2px;line-height:22px;letter-spacing:1.247px;color:#222222;">580</span>
<span class="t" style="left:1312.10px;top:730.28px;font-size:16.2px;line-height:22px;letter-spacing:0.851px;color:#222222;">natka</span>
<span class="t" style="left:98.00px;top:766.56px;font-size:16.2px;line-height:22px;letter-spacing:0.928px;color:#222222;">https://app.grammarly.com</span>
<span class="t" style="left:711.40px;top:766.56px;font-size:16.2px;line-height:22px;letter-spacing:0.867px;color:#222222;">0 bytes</span>
<span class="t" style="left:843.20px;top:766.56px;font-size:16.2px;line-height:22px;letter-spacing:0.867px;color:#222222;">0 bytes</span>
<span class="t" style="left:1037.90px;top:766.56px;font-size:16.2px;line-height:22px;letter-spacing:0.550px;color:#222222;">0</span>
<span class="t" style="left:1184.80px;top:766.56px;font-size:16.2px;line-height:22px;letter-spacing:0.550px;color:#222222;">0</span>
<span class="t" style="left:1235.50px;top:766.56px;font-size:16.2px;line-height:22px;letter-spacing:0.073px;color:#222222;">31170</span>
<span class="t" style="left:1312.10px;top:766.56px;font-size:16.2px;line-height:22px;letter-spacing:0.851px;color:#222222;">natka</span>
<span class="t" style="left:319.40px;top:819.80px;font-size:16.2px;line-height:22px;letter-spacing:0.712px;color:#222222;">Packets in:</span>
<span class="t" style="left:488.40px;top:819.80px;font-size:16.2px;line-height:22px;letter-spacing:1.577px;color:#222222;">11,595,498</span>
<span class="t" style="left:912.10px;top:819.80px;font-size:16.2px;line-height:22px;letter-spacing:0.794px;color:#222222;">Data received:</span>
<span class="t" style="left:1110.20px;top:819.80px;font-size:16.2px;line-height:22px;letter-spacing:0.934px;color:#222222;">8.76 GB</span>
<span class="t" style="left:319.40px;top:849.90px;font-size:16.2px;line-height:22px;letter-spacing:0.802px;color:#222222;">Packets out:</span>
<span class="t" style="left:499.00px;top:849.90px;font-size:16.2px;line-height:22px;letter-spacing:1.424px;color:#222222;">8,231,940</span>
<span class="t" style="left:912.10px;top:849.90px;font-size:16.2px;line-height:22px;letter-spacing:0.868px;color:#222222;">Data sent:</span>
<span class="t" style="left:1110.20px;top:849.90px;font-size:16.2px;line-height:22px;letter-spacing:0.934px;color:#222222;">4.47 GB</span>
<span class="t" style="left:319.40px;top:880.20px;font-size:16.2px;line-height:22px;letter-spacing:0.717px;color:#222222;">Packets in/sec:</span>
<span class="t" style="left:573.40px;top:880.20px;font-size:16.2px;line-height:22px;letter-spacing:0.550px;color:#4a9cec;">6</span>
<span class="t" style="left:912.10px;top:880.20px;font-size:16.2px;line-height:22px;letter-spacing:0.808px;color:#222222;">Data received/sec:</span>
<span class="t" style="left:1096.00px;top:880.20px;font-size:16.2px;line-height:22px;letter-spacing:1.037px;color:#222222;">891 bytes</span>
<span class="t" style="left:319.40px;top:910.40px;font-size:16.2px;line-height:22px;letter-spacing:0.795px;color:#222222;">Packets out/sec:</span>
<span class="t" style="left:573.40px;top:910.40px;font-size:16.2px;line-height:22px;letter-spacing:0.550px;color:#ee4538;">5</span>
<span class="t" style="left:912.10px;top:910.40px;font-size:16.2px;line-height:22px;letter-spacing:0.840px;color:#222222;">Data sent/sec:</span>
<span class="t" style="left:1096.00px;top:910.40px;font-size:16.2px;line-height:22px;letter-spacing:1.037px;color:#222222;">685 bytes</span>
<span class="t" style="left:709.50px;top:817.40px;font-size:13.6px;line-height:19px;letter-spacing:0.204px;color:#1e1e1e;font-weight:700;-webkit-text-stroke-width:0px;">PACKETS</span>
</div>
</div>
</body>
</html>
